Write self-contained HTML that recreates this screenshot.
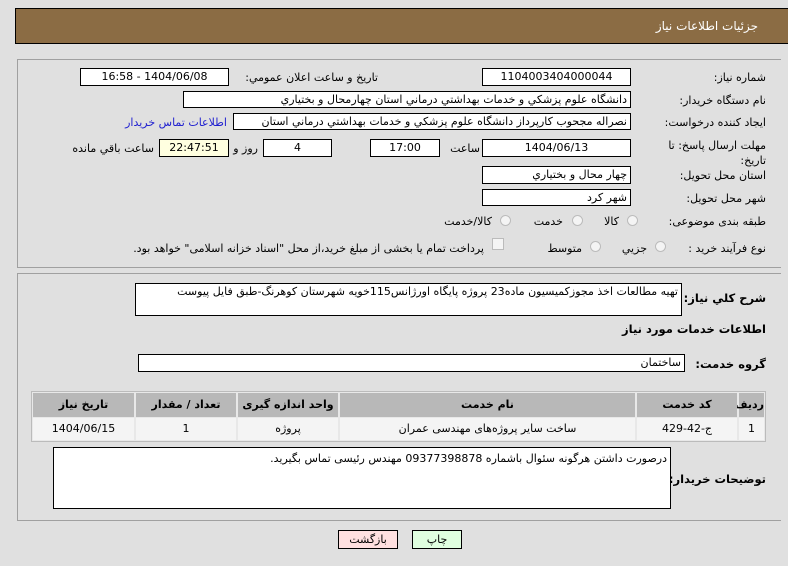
<!DOCTYPE html>
<html><head><meta charset="utf-8"><style>
body{margin:0;width:788px;height:566px;background:#e0e0e0;font-family:"DejaVu Sans",Tahoma,sans-serif;font-size:11px;color:#000;position:relative;overflow:hidden}
div{position:absolute;box-sizing:border-box}
.b{background:#fff;border:1px solid #000;text-align:center;line-height:15px;direction:rtl;white-space:nowrap;overflow:hidden}
.l{direction:rtl;white-space:nowrap;text-align:right}
.r{direction:rtl;text-align:right;padding-right:3px}
.rad{width:11px;height:11px;border-radius:50%;border:1px solid #bbb;background:#f4f4f4}
.th{background:#b8b8b8;font-weight:bold;text-align:center;line-height:24px;direction:rtl}
.td{background:#f4f4f4;text-align:center;line-height:22px;direction:rtl}
.bl{font-weight:bold;font-size:11.5px}
</style></head><body>
<div style="left:15px;top:8px;width:775px;height:36px;background:#8b6c44;border:1px solid #000"></div>
<div class="l" style="right:30px;top:19px;color:#fff;font-size:12px">جزئيات اطلاعات نياز</div>

<div style="left:17px;top:59px;width:764px;height:209px;border:1px solid #a0a0a0;border-right:none"></div>
<div class="l" style="right:22px;top:71px">شماره نياز:</div>
<div class="b" style="left:482px;top:68px;width:149px;height:18px">1104003404000044</div>
<div class="l" style="right:410px;top:71px">تاريخ و ساعت اعلان عمومي:</div>
<div class="b" style="left:80px;top:68px;width:149px;height:18px">1404/06/08 - 16:58</div>

<div class="l" style="right:22px;top:94px">نام دستگاه خريدار:</div>
<div class="b r" style="left:183px;top:91px;width:448px;height:17px">دانشگاه علوم پزشكي و خدمات بهداشتي درماني استان چهارمحال و بختياري</div>

<div class="l" style="right:22px;top:116px">ايجاد کننده درخواست:</div>
<div class="b r" style="left:233px;top:113px;width:398px;height:17px">نصراله مجحوب كارپرداز دانشگاه علوم پزشكي و خدمات بهداشتي درماني استان</div>
<div class="l" style="right:561px;top:116px;color:#2020d0">اطلاعات تماس خريدار</div>

<div class="l" style="right:22px;top:138px;line-height:15px;width:100px;white-space:normal">مهلت ارسال پاسخ: تا تاريخ:</div>
<div class="b" style="left:482px;top:139px;width:149px;height:18px">1404/06/13</div>
<div class="l" style="right:308px;top:142px">ساعت</div>
<div class="b" style="left:370px;top:139px;width:70px;height:18px">17:00</div>
<div class="b" style="left:263px;top:139px;width:69px;height:18px">4</div>
<div class="l" style="right:530px;top:142px">روز و</div>
<div class="b" style="left:159px;top:139px;width:70px;height:18px;background:#ffffe0">22:47:51</div>
<div class="l" style="right:634px;top:142px">ساعت باقي مانده</div>

<div class="l" style="right:22px;top:169px">استان محل تحويل:</div>
<div class="b r" style="left:482px;top:166px;width:149px;height:18px">چهار محال و بختياري</div>
<div class="l" style="right:22px;top:192px">شهر محل تحويل:</div>
<div class="b r" style="left:482px;top:189px;width:149px;height:17px">شهر كرد</div>

<div class="l" style="right:22px;top:215px">طبقه بندی موضوعی:</div>
<div class="rad" style="left:627px;top:215px"></div><div class="l" style="right:169px;top:215px">كالا</div>
<div class="rad" style="left:572px;top:215px"></div><div class="l" style="right:225px;top:215px">خدمت</div>
<div class="rad" style="left:500px;top:215px"></div><div class="l" style="right:296px;top:215px">كالا/خدمت</div>
<div class="l" style="right:22px;top:242px">نوع فرآيند خريد :</div>
<div class="rad" style="left:655px;top:241px"></div><div class="l" style="right:141px;top:242px">جزيي</div>
<div class="rad" style="left:590px;top:241px"></div><div class="l" style="right:206px;top:242px">متوسط</div>
<div style="left:492px;top:238px;width:12px;height:12px;border:1px solid #bbb;background:#f4f4f4"></div>
<div class="l" style="right:304px;top:242px">پرداخت تمام يا بخشی از مبلغ خريد،از محل "اسناد خزانه اسلامی" خواهد بود.</div>

<div style="left:17px;top:273px;width:764px;height:248px;border:1px solid #a0a0a0;border-right:none"></div>
<div class="l bl" style="right:22px;top:291px">شرح کلي نياز:</div>
<div class="b r" style="left:135px;top:283px;width:547px;height:33px;text-align:right">تهيه مطالعات اخذ مجوزكميسيون ماده23 پروژه پايگاه اورژانس115خويه شهرستان كوهرنگ-طبق فايل پيوست</div>
<div class="l bl" style="right:22px;top:322px">اطلاعات خدمات مورد نياز</div>
<div class="l bl" style="right:22px;top:357px">گروه خدمت:</div>
<div class="b r" style="left:138px;top:354px;width:547px;height:18px">ساختمان</div>

<div style="left:31px;top:391px;width:735px;height:51px;border:1px solid #bbb;background:#e8e8e8"></div>
<div class="th" style="left:739px;top:393px;width:25px;height:24px">رديف</div>
<div class="th" style="left:637px;top:393px;width:100px;height:24px">کد خدمت</div>
<div class="th" style="left:340px;top:393px;width:295px;height:24px">نام خدمت</div>
<div class="th" style="left:238px;top:393px;width:100px;height:24px">واحد اندازه گيری</div>
<div class="th" style="left:136px;top:393px;width:100px;height:24px">تعداد / مقدار</div>
<div class="th" style="left:33px;top:393px;width:101px;height:24px">تاريخ نياز</div>
<div class="td" style="left:739px;top:418px;width:25px;height:22px">1</div>
<div class="td" style="left:637px;top:418px;width:100px;height:22px">ج-42-429</div>
<div class="td" style="left:340px;top:418px;width:295px;height:22px">ساخت ساير پروژه‌های مهندسی عمران</div>
<div class="td" style="left:238px;top:418px;width:100px;height:22px">پروژه</div>
<div class="td" style="left:136px;top:418px;width:100px;height:22px">1</div>
<div class="td" style="left:33px;top:418px;width:101px;height:22px">1404/06/15</div>

<div class="l bl" style="right:22px;top:472px">توضيحات خريدار:</div>
<div class="b r" style="left:53px;top:447px;width:618px;height:62px;text-align:right;line-height:22px">درصورت داشتن هرگونه سئوال باشماره 09377398878 مهندس رئیسی تماس بگیرید.</div>

<div style="left:338px;top:530px;width:60px;height:19px;background:#ffe0e0;border:1px solid #000;text-align:center;line-height:17px">بازگشت</div>
<div style="left:412px;top:530px;width:50px;height:19px;background:#e0ffe0;border:1px solid #000;text-align:center;line-height:17px">چاپ</div>
</body></html>
